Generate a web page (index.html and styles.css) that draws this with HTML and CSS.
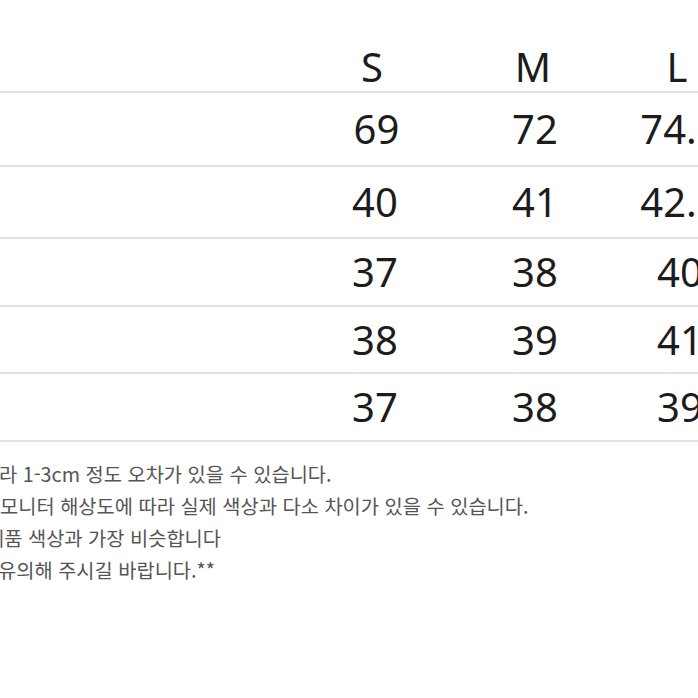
FILE: index.html
```html
<!DOCTYPE html>
<html lang="ko">
<head>
<meta charset="utf-8">
<title>사이즈표</title>
<link rel="stylesheet" href="styles.css">
</head>
<body>
<div class="page">
  <div class="table">
    <div class="row head"><div class="label"></div><div class="cell">S</div><div class="cell">M</div><div class="cell">L</div></div>
    <div class="row r1"><div class="label"></div><div class="cell">69</div><div class="cell">72</div><div class="cell">74.5</div></div>
    <div class="row r2"><div class="label"></div><div class="cell">40</div><div class="cell">41</div><div class="cell">42.5</div></div>
    <div class="row r3"><div class="label"></div><div class="cell">37</div><div class="cell">38</div><div class="cell">40</div></div>
    <div class="row r4"><div class="label"></div><div class="cell">38</div><div class="cell">39</div><div class="cell">41</div></div>
    <div class="row r5"><div class="label"></div><div class="cell">37</div><div class="cell">38</div><div class="cell">39</div></div>
  </div>
  <div class="notes">
    <div class="note n1">라 1-3cm 정도 오차가 있을 수 있습니다.</div>
    <div class="note n2">모니터 해상도에 따라 실제 색상과 다소 차이가 있을 수 있습니다.</div>
    <div class="note n3">제품 색상과 가장 비슷합니다</div>
    <div class="note n4">유의해 주시길 바랍니다.**</div>
  </div>
</div>
</body>
</html>
```
FILE: styles.css
```css
html, body {
  margin: 0;
  padding: 0;
  background: #fff;
  overflow: hidden;
}
.page {
  width: 698px;
  height: 698px;
  overflow: hidden;
}
.table {
  width: 740px;
}
.row {
  display: grid;
  grid-template-columns: 305px 140px 180px 110px;
  align-items: center;
  border-bottom: 2px solid #e2e2e2;
}
.cell {
  font-family: "Noto Sans", "Open Sans", sans-serif;
  font-size: 40px;
  line-height: 40px;
  color: #1c1c1c;
  text-align: center;
}
.head {
  height: 91px;
  align-items: start;
}
.head .cell {
  padding-top: 47px;
}
.head .cell:nth-child(2) {
  padding-right: 6px;
}
.head .cell:nth-child(3) {
  padding-right: 4px;
}
.head .cell:nth-child(4) {
  padding-right: 6px;
}
.r1 { height: 72px; }
.r2 { height: 70px; }
.r3 { height: 66px; }
.r4 { height: 65px; }
.r5 { height: 66px; }
.r1 .cell:nth-child(2) { padding-left: 3px; }
.notes {
  margin-top: 16px;
  font-family: "Noto Sans CJK KR", "Noto Sans", sans-serif;
  font-size: 19.8px;
  line-height: 32px;
  color: #555;
  white-space: nowrap;
}
.n1 { margin-left: -1px; }
.n3 { margin-left: -14px; }
.n4 { margin-left: -2px; }
```
